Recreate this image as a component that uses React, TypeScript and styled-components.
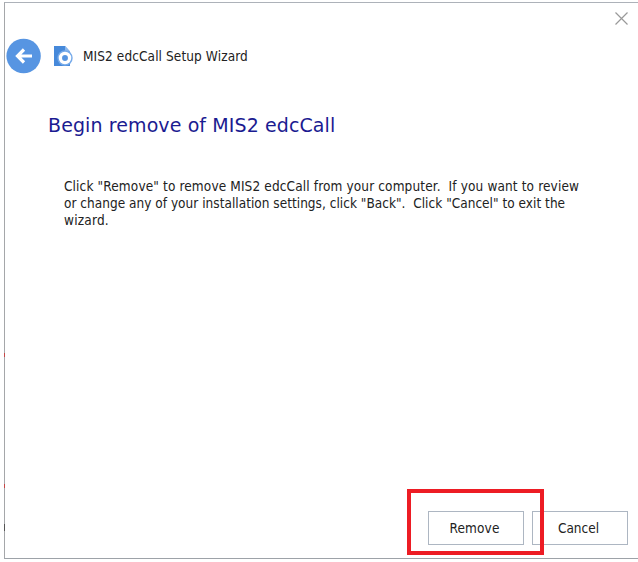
import React from "react";
import styled, { createGlobalStyle } from "styled-components";

const GlobalStyle = createGlobalStyle`
  * { box-sizing: border-box; }
  body { margin: 0; background: #fff; overflow: hidden; }
`;

const Screen = styled.div`
  width: 638px;
  height: 562px;
  padding: 2px 0 2px 4px;
  background: #fff;
  color: #222;
  font-family: "DejaVu Sans Condensed", "DejaVu Sans", sans-serif;
  font-stretch: condensed;
  font-size: 13.5px;
`;

const Wizard = styled.main`
  position: relative;
  display: flex;
  flex-direction: column;
  height: 557px;
  border: solid #a5a7aa;
  border-width: 1px 0 1px 1px;
  border-top-color: #adb2b9;
  border-bottom-color: #9da2a8;
`;

const TitleBar = styled.div`
  display: flex;
  justify-content: flex-end;
  height: 35px;
  padding: 9px 10px 0 0;
`;

const CloseButton = styled.button`
  width: 13px;
  height: 13px;
  padding: 0;
  border: 0;
  background: none;
  svg { display: block; }
`;

const Header = styled.header`
  display: flex;
  align-items: center;
  height: 36px;
  padding-left: 1px;
`;

const BackButton = styled.button`
  width: 36px;
  height: 36px;
  padding: 0;
  border: 0;
  background: none;
  svg { display: block; }
`;

const AppIcon = styled.svg`
  margin-left: 11px;
`;

const Text = styled.span<{ $tracking: number }>`
  display: block;
  white-space: pre;
  letter-spacing: ${(p) => p.$tracking}px;
`;

const Title = styled(Text)`
  margin-left: 10px;
  padding-bottom: 1px;
`;

const Heading = styled.h1`
  margin: 37px 0 0 43px;
  font: 400 19px/28px "DejaVu Sans", sans-serif;
  color: #1b1b91;
`;

const Message = styled.div`
  margin: 39px 0 0 59px;
  line-height: 17px;
`;

const Footer = styled.footer`
  display: flex;
  gap: 8px;
  justify-content: flex-end;
  margin-top: auto;
  padding: 0 10px 13px 0;
`;

const Button = styled.button`
  display: flex;
  align-items: center;
  justify-content: center;
  width: 96px;
  height: 34px;
  padding: 0 3px 0 0;
  border: 1px solid #adb6c2;
  background: #fff;
  color: #222;
  font: inherit;
`;

const Highlight = styled.div`
  position: absolute;
  right: 94px;
  bottom: 3px;
  width: 137px;
  height: 66px;
  border: 4px solid #ed1c24;
`;

const EdgeMark = styled.i<{ $top: number; $height: number; $color: string }>`
  position: absolute;
  left: -1px;
  top: ${(p) => p.$top}px;
  width: 1px;
  height: ${(p) => p.$height}px;
  background: ${(p) => p.$color};
`;

export default function App() {
  return (
    <>
      <GlobalStyle />
      <Screen>
        <Wizard>
          <TitleBar>
            <CloseButton aria-label="Close">
              <svg width="13" height="13" viewBox="0 0 13 13">
                <path d="M.5.5l12 12M12.5.5l-12 12" stroke="#999" strokeWidth="1.2" />
              </svg>
            </CloseButton>
          </TitleBar>
          <Header>
            <BackButton aria-label="Back">
              <svg width="36" height="36" viewBox="0 0 36 36">
                <circle cx="17.6" cy="18" r="17.2" fill="#5795e2" />
                <path d="M26 18H11.5M18 11.500L11.500 18l6.500 6.500" fill="none" stroke="#fff" strokeWidth="3.2" />
              </svg>
            </BackButton>
            <AppIcon width="20" height="22" viewBox="0 0 20 22">
              <path d="M1 1h11l5 5.500v14.500H1z" fill="#4689da" />
              <path d="M12 1l5 5.500h-5z" fill="#8bb7ec" />
              <circle cx="12" cy="13" r="7.700" fill="#75aaea" />
              <circle cx="12" cy="13" r="4.600" fill="#5594e0" stroke="#fff" strokeWidth="3.300" />
            </AppIcon>
            <Title $tracking={0.1}>MIS2 edcCall Setup Wizard</Title>
          </Header>
          <Heading>
            <Text $tracking={0.1}>Begin remove of MIS2 edcCall</Text>
          </Heading>
          <Message>
            <Text $tracking={0.13}>{'Click "Remove" to remove MIS2 edcCall from your computer.  If you want to review'}</Text>
            <Text $tracking={0.02}>{'or change any of your installation settings, click "Back".  Click "Cancel" to exit the'}</Text>
            <Text $tracking={0.2}>wizard.</Text>
          </Message>
          <Footer>
            <Button><Text $tracking={0.15}>Remove</Text></Button>
            <Button><Text $tracking={0}>Cancel</Text></Button>
          </Footer>
          <Highlight />
          <EdgeMark $top={350} $height={4} $color="#c74747" />
          <EdgeMark $top={481} $height={4} $color="#c74747" />
          <EdgeMark $top={521} $height={7} $color="#555" />
        </Wizard>
      </Screen>
    </>
  );
}
